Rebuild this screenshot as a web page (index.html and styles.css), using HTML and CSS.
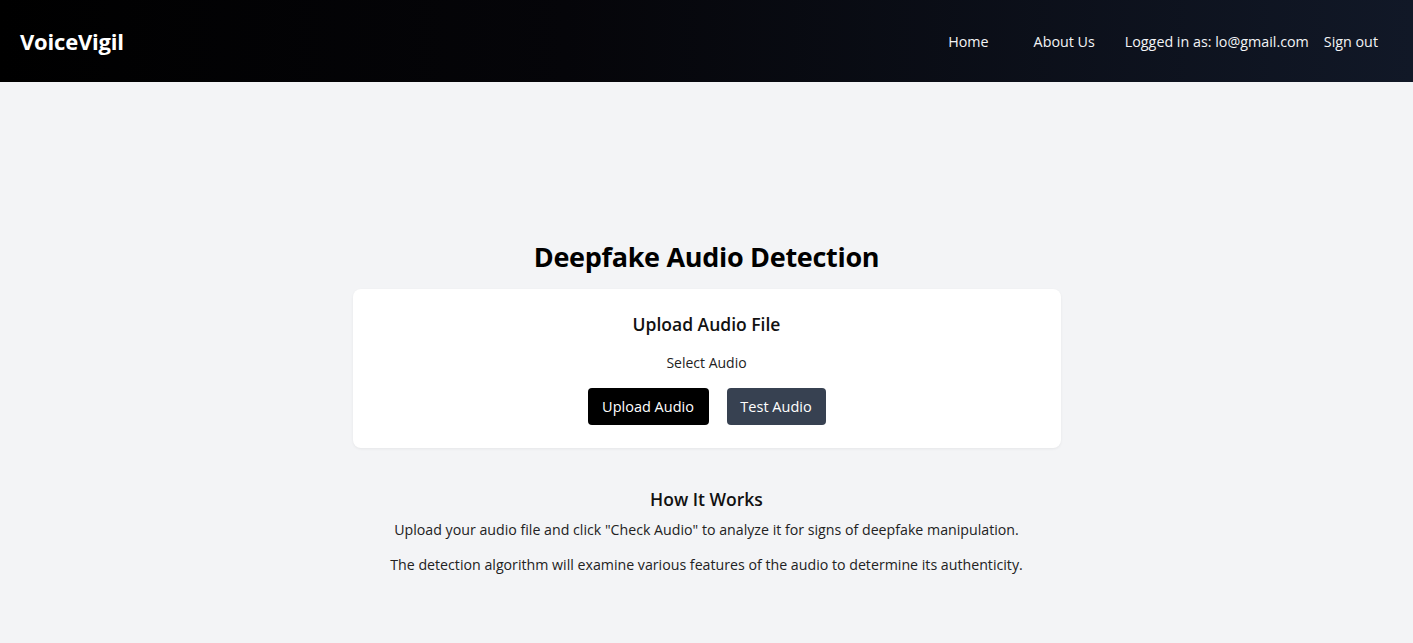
FILE: index.html
```html
<!DOCTYPE html>
<html lang="en">
<head>
<meta charset="utf-8">
<title>VoiceVigil</title>
<link rel="stylesheet" href="styles.css">
</head>
<body>
<header class="topbar">
  <div class="brand">VoiceVigil</div>
  <nav class="nav">
    <a class="nav-link home" href="#">Home</a>
    <a class="nav-link about" href="#">About Us</a>
    <span class="nav-user">Logged in as: lo@gmail.com</span>
    <a class="nav-link signout" href="#">Sign out</a>
  </nav>
</header>
<main class="main">
  <h1 class="title">Deepfake Audio Detection</h1>
  <section class="card">
    <h2 class="card-title">Upload Audio File</h2>
    <p class="card-label">Select Audio</p>
    <div class="actions">
      <button class="btn btn-dark">Upload Audio</button>
      <button class="btn btn-gray">Test Audio</button>
    </div>
  </section>
  <section class="how">
    <h3 class="how-title">How It Works</h3>
    <p class="how-text">Upload your audio file and click "Check Audio" to analyze it for signs of deepfake manipulation.</p>
    <p class="how-text">The detection algorithm will examine various features of the audio to determine its authenticity.</p>
  </section>
</main>
</body>
</html>
```
FILE: styles.css
```css
* { box-sizing: border-box; }
html, body { margin: 0; padding: 0; }
body {
  font-family: "Open Sans", "Noto Sans", sans-serif;
  background: #f3f4f6;
  color: #111827;
  min-height: 643px;
}
.topbar {
  height: 82px;
  display: flex;
  align-items: center;
  justify-content: space-between;
  padding: 0 35px 0 20px;
  background: linear-gradient(to right, #000000 0%, #050509 40%, #111827 100%);
  color: #fff;
}
.brand {
  font-size: 22px;
  font-weight: 700;
  letter-spacing: -0.2px;
}
.nav {
  display: flex;
  align-items: center;
  font-size: 14.3px;
}
.nav-link, .nav-user { color: #f3f4f6; text-decoration: none; }
.home { margin-right: 45px; }
.about { margin-right: 30px; }
.nav-user { margin-right: 15px; }
.main {
  display: flex;
  flex-direction: column;
  align-items: center;
  padding-top: 157px;
}
.title {
  margin: 0 0 14px;
  font-size: 27px;
  font-weight: 700;
  line-height: 36px;
  color: #000;
  letter-spacing: -0.3px;
}
.card {
  width: 708px;
  height: 159px;
  background: #fff;
  border-radius: 8px;
  box-shadow: 0 1px 3px rgba(0,0,0,0.06);
  display: flex;
  flex-direction: column;
  align-items: center;
  padding-top: 22px;
}
.card-title {
  margin: 0;
  font-size: 17.5px;
  font-weight: 600;
  line-height: 26px;
  color: #111;
}
.card-label {
  margin: 16px 0 0;
  font-size: 14px;
  line-height: 20px;
  color: #222;
}
.actions {
  display: flex;
  gap: 18px;
  margin-top: 15px;
}
.btn {
  font-family: inherit;
  font-size: 14.5px;
  color: #fff;
  border: 0;
  border-radius: 4px;
  height: 37px;
  padding: 0 10px;
}
.btn-dark { background: #000; width: 121px; }
.btn-gray { background: #374151; width: 99px; }
.how {
  margin-top: 38px;
  display: flex;
  flex-direction: column;
  align-items: center;
}
.how-title {
  margin: 0 0 7px;
  font-size: 17.5px;
  font-weight: 600;
  line-height: 26px;
  color: #111;
}
.how-text {
  margin: 0 0 14px;
  font-size: 14.2px;
  line-height: 21px;
  color: #222;
}
```
